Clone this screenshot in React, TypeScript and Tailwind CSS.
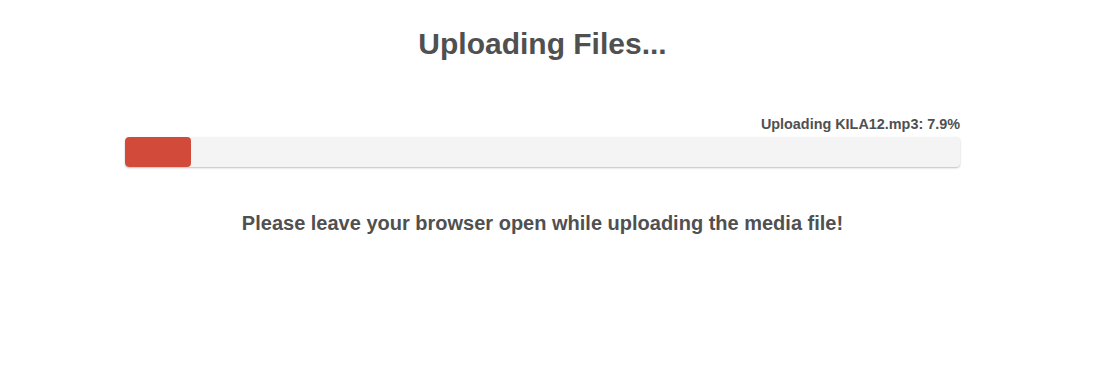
import React from 'react';

const App: React.FC = () => {
  const progress = 7.9;

  return (
    <div className="min-h-[374px] bg-white font-['Liberation_Sans',Arial,sans-serif] text-[#505050]">
      <div className="ml-[125px] w-[835px] pt-[26px]">
        {/* Title */}
        <h1 className="text-center text-[30px] font-bold leading-[36px]">Uploading Files...</h1>

        {/* Progress */}
        <div className="mt-[54px] text-right text-[14.4px] font-bold leading-[17px]">
          Uploading KILA12.mp3: {progress}%
        </div>
        <div className="mt-[4px] h-[30px] w-full overflow-hidden rounded-[4px] bg-[#f4f4f4] shadow-[0_1px_2px_rgba(0,0,0,0.25)]">
          <div
            className="h-full rounded-[4px] bg-[#d24a3a]"
            style={{ width: `${progress}%` }}
          />
        </div>

        {/* Notice */}
        <p className="mt-[44px] text-center text-[20px] font-bold leading-[24px]">
          Please leave your browser open while uploading the media file!
        </p>
      </div>
    </div>
  );
};

export default App;
